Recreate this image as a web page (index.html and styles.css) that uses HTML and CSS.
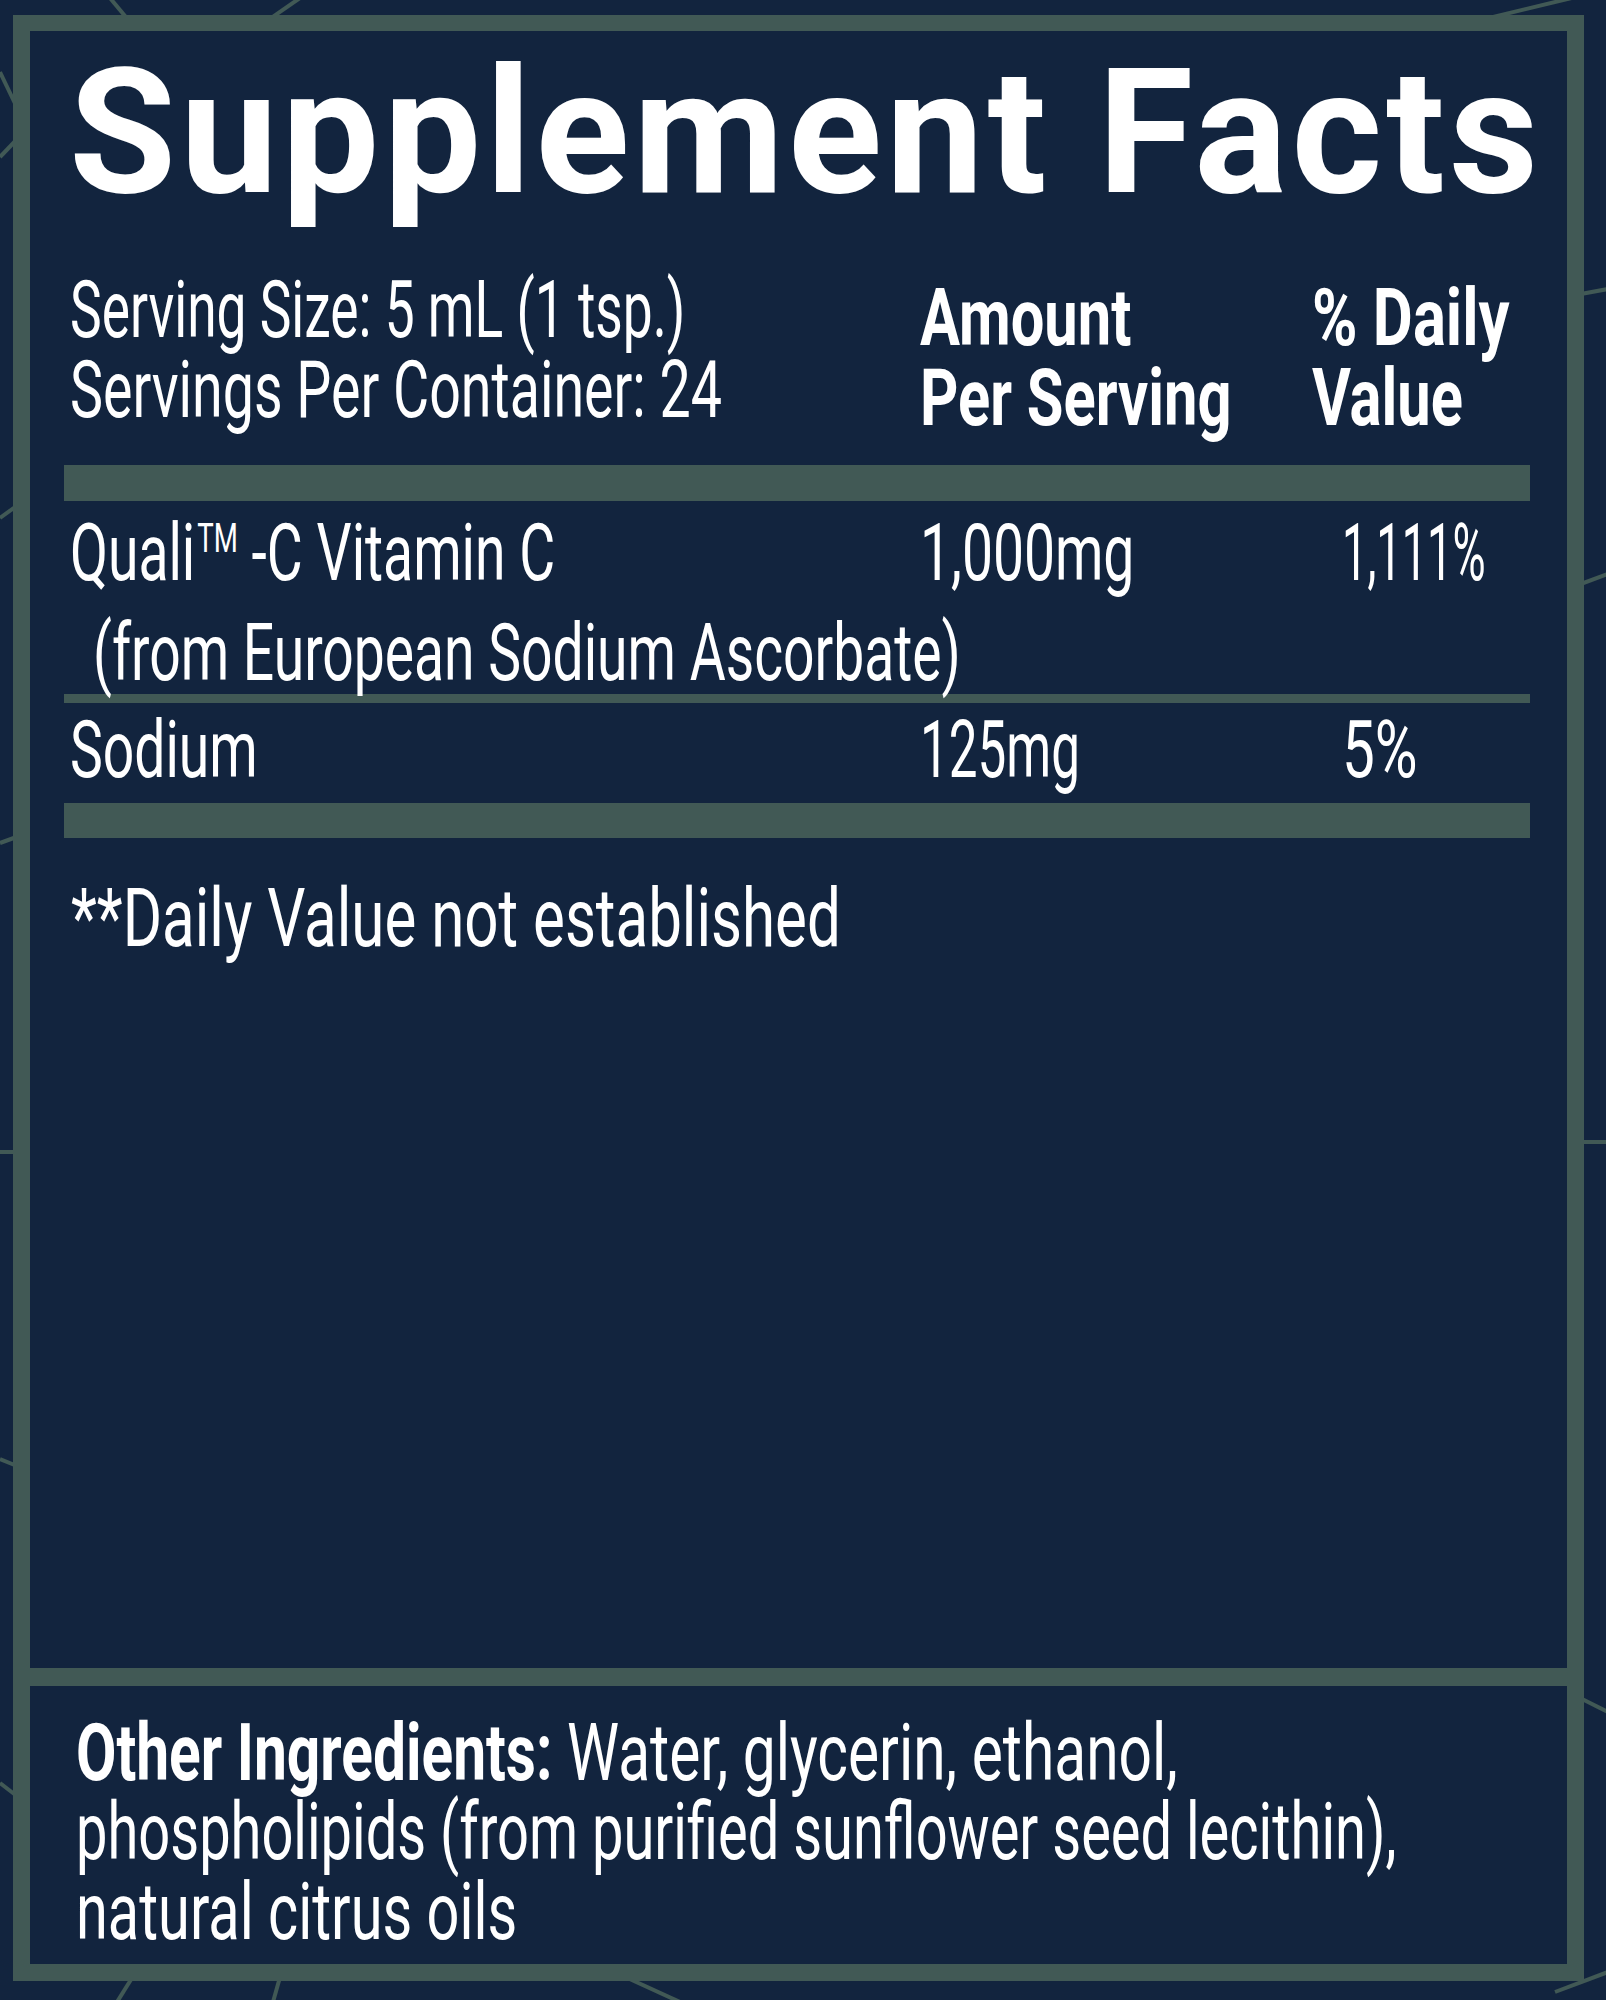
FILE: index.html
```html
<!DOCTYPE html>
<html lang="en">
<head>
<meta charset="utf-8">
<title>Supplement Facts</title>
<link rel="stylesheet" href="styles.css">
</head>
<body>
<svg class="deco" width="1606" height="2000" viewBox="0 0 1606 2000" aria-hidden="true">
  <g stroke="#415955" stroke-width="4" fill="none" stroke-linecap="butt">
    <line x1="110" y1="-2" x2="140" y2="34"/>
    <line x1="300" y1="-2" x2="248" y2="34"/>
    <line x1="0" y1="72" x2="22" y2="118"/>
    <line x1="0" y1="157" x2="22" y2="134"/>
    <line x1="0" y1="518" x2="22" y2="502"/>
    <line x1="0" y1="843" x2="22" y2="835"/>
    <line x1="0" y1="1152" x2="22" y2="1152"/>
    <line x1="0" y1="1459" x2="22" y2="1468"/>
    <line x1="0" y1="1783" x2="22" y2="1800"/>
    <line x1="137" y1="1970" x2="117" y2="2002"/>
    <line x1="282" y1="1970" x2="273" y2="2002"/>
    <line x1="610" y1="1970" x2="680" y2="2002"/>
    <line x1="1460" y1="25" x2="1580" y2="-4"/>
    <line x1="1570" y1="296" x2="1608" y2="289"/>
    <line x1="1570" y1="588" x2="1608" y2="574"/>
    <line x1="1570" y1="1142" x2="1608" y2="1142"/>
    <line x1="1570" y1="1693" x2="1608" y2="1712"/>
    <line x1="1555" y1="1992" x2="1608" y2="1972"/>
  </g>
</svg>

<div class="label">
  <section class="main">
    <h1 class="title">Supplement Facts</h1>

    <div class="grid head">
      <div class="c1">
        <span class="t t-size">Serving Size: 5 mL (1 tsp.)</span>
        <span class="t t-per">Servings Per Container: 24</span>
      </div>
      <div class="hcol">
        <span class="tb">Amount</span>
        <span class="tb">Per Serving</span>
      </div>
      <div class="hcol">
        <span class="tb tb-dv">% Daily</span>
        <span class="tb">Value</span>
      </div>
    </div>

    <div class="rule rule-top"></div>

    <div class="grid row row-first">
      <div class="c1"><span class="t t-quali">Quali<span class="tm">TM</span> -C Vitamin C</span></div>
      <div class="c2"><span class="t">1,000mg</span></div>
      <div class="c3"><span class="t t-pct">1,111%</span></div>
    </div>
    <div class="sub"><span class="t">(from European Sodium Ascorbate)</span></div>

    <div class="rule rule-thin"></div>

    <div class="grid row row-second">
      <div class="c1"><span class="t">Sodium</span></div>
      <div class="c2"><span class="t t-mg">125mg</span></div>
      <div class="c3"><span class="t t-five">5%</span></div>
    </div>

    <div class="rule rule-bottom"></div>

    <p class="note"><span class="t tn">**Daily Value not established</span></p>
  </section>

  <section class="ingredients">
    <span class="ing ing-1"><b>Other Ingredients:</b> Water, glycerin, ethanol,</span>
    <span class="ing ing-2">phospholipids (from purified sunflower seed lecithin),</span>
    <span class="ing ing-3">natural citrus oils</span>
  </section>
</div>
</body>
</html>
```

FILE: styles.css
```css
* {
  box-sizing: border-box;
  margin: 0;
  padding: 0;
}

html,
body {
  width: 1606px;
  height: 2000px;
}

body {
  position: relative;
  overflow: hidden;
  background: #12243e;
  color: #ffffff;
  font-family: Roboto, "Liberation Sans", sans-serif;
}

.deco {
  position: absolute;
  left: 0;
  top: 0;
}

.label {
  position: relative;
  display: flex;
  flex-direction: column;
  width: 1571px;
  height: 1966px;
  margin: 15px 0 0 13px;
  border: 17px solid #415955;
  border-top-width: 16px;
  background: #12243e;
}

.main {
  flex: 1;
  padding: 11.5px 37px 0 34px;
}

.title {
  margin-left: 5px;
  font-size: 174px;
  line-height: 180px;
  font-weight: 700;
  letter-spacing: 4px;
  white-space: nowrap;
}

.grid {
  display: grid;
  grid-template-columns: 856px 392px minmax(0, 1fr);
}

.head {
  margin-top: 47.5px;
}

.c1 {
  padding-left: 6px;
}

.c3 {
  padding-left: 30px;
}

.hcol {
  margin-top: 7.6px;
}

.t,
.tb {
  display: block;
  font-size: 80px;
  line-height: 80px;
  white-space: nowrap;
  transform-origin: 0 0;
}

.t {
  font-weight: 400;
  transform: scaleX(0.69);
}

.tb {
  font-weight: 700;
  transform: scaleX(0.745);
}

.tb-dv {
  transform: scaleX(0.77);
}

.t-size {
  transform: scaleX(0.666);
}

.t-per {
  transform: scaleX(0.694);
}

.t-quali {
  transform: scaleX(0.69);
}

.tm {
  font-size: 40px;
  line-height: 0;
  vertical-align: 28px;
  margin-left: 3px;
}

.t-pct {
  transform: scaleX(0.565);
}

.t-mg {
  transform: scaleX(0.64);
}

.t-five {
  transform: scaleX(0.73);
}

.rule {
  background: #415955;
}

.rule-top {
  height: 36px;
  margin-top: 27.4px;
}

.row-first {
  margin-top: 11.6px;
}

.sub {
  margin-top: 20px;
  padding-left: 29px;
}

.rule-thin {
  height: 9px;
  margin-top: 1.4px;
}

.row-second {
  margin-top: 6.6px;
}

.rule-bottom {
  height: 35px;
  margin-top: 13.4px;
}

.note {
  margin-top: 40px;
  padding-left: 7px;
}

.tn {
  font-size: 82px;
  transform: scaleX(0.732);
}

.ingredients {
  display: flex;
  flex-direction: column;
  height: 296px;
  padding: 27.6px 0 0 46px;
  border-top: 18px solid #415955;
}

.ing {
  display: block;
  font-size: 80px;
  line-height: 79.5px;
  font-weight: 400;
  white-space: nowrap;
  transform-origin: 0 0;
  transform: scaleX(0.70);
}

.ing b {
  font-weight: 700;
}

.ing-1 {
  transform: scaleX(0.733);
}

.ing-3 {
  transform: scaleX(0.721);
}
```
